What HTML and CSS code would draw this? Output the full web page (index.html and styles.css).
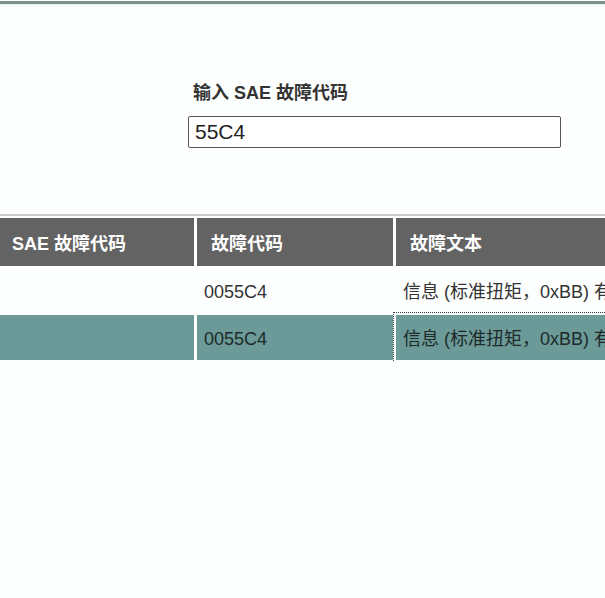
FILE: index.html
```html
<!DOCTYPE html>
<html lang="zh">
<head>
<meta charset="utf-8">
<title>SAE 故障代码</title>
<link rel="stylesheet" href="styles.css">
</head>
<body>
<div class="topbar"></div>
<section class="search">
  <label class="search-label" for="code">输入 SAE 故障代码</label>
  <input class="search-input" id="code" type="text" value="55C4">
</section>
<table class="codes">
  <colgroup>
    <col class="col-sae">
    <col class="col-code">
    <col class="col-text">
  </colgroup>
  <thead>
    <tr>
      <th>SAE 故障代码</th>
      <th>故障代码</th>
      <th>故障文本</th>
    </tr>
  </thead>
  <tbody>
    <tr>
      <td></td>
      <td>0055C4</td>
      <td>信息 (标准扭矩，0xBB) 有效</td>
    </tr>
    <tr class="selected">
      <td></td>
      <td>0055C4</td>
      <td class="focused">信息 (标准扭矩，0xBB) 有效</td>
    </tr>
  </tbody>
</table>
</body>
</html>
```

FILE: styles.css
```css
html, body {
  margin: 0;
  padding: 0;
  overflow: hidden;
  background: #fdfefe;
  font-family: "Liberation Sans", "Noto Sans CJK SC", sans-serif;
}

.topbar {
  height: 3px;
  margin-top: 1px;
  background: #7d918c;
  border-bottom: 1px solid #e4f3f3;
}

.search {
  display: flex;
  flex-direction: column;
  align-items: flex-start;
  padding: 76px 0 0 188px;
}

.search-label {
  font-size: 18px;
  font-weight: bold;
  color: #333;
  padding-left: 5px;
  line-height: 24px;
}

.search-input {
  margin-top: 11px;
  box-sizing: border-box;
  width: 373px;
  height: 32px;
  border: 1px solid #555;
  border-radius: 2px;
  padding: 0 6px;
  font-family: "Liberation Sans", "Noto Sans CJK SC", sans-serif;
  font-size: 21px;
  color: #222;
  background: #fff;
  outline: none;
}

.codes {
  table-layout: fixed;
  width: 824px;
  margin-top: 66px;
  margin-left: -5px;
  border-collapse: separate;
  border-spacing: 3px 2px;
  border-top: 2px solid #cbcbcb;
  font-size: 18px;
  white-space: nowrap;
}

.col-sae,
.col-code {
  width: 196px;
}

.col-text {
  width: 420px;
}

.codes th,
.codes td {
  box-sizing: border-box;
  text-align: left;
  overflow: hidden;
}

.codes th {
  height: 48px;
  padding: 0 14px;
  background: #636363;
  color: #fff;
  font-weight: bold;
}

.codes td {
  height: 45px;
  padding: 2px 7px 0;
  line-height: 26px;
  color: #333;
}

.codes .selected td {
  background: #6b9a98;
  color: #1e2a2a;
}

.codes .focused {
  outline: 1px dotted #2b3b3b;
  outline-offset: 2px;
}
```
